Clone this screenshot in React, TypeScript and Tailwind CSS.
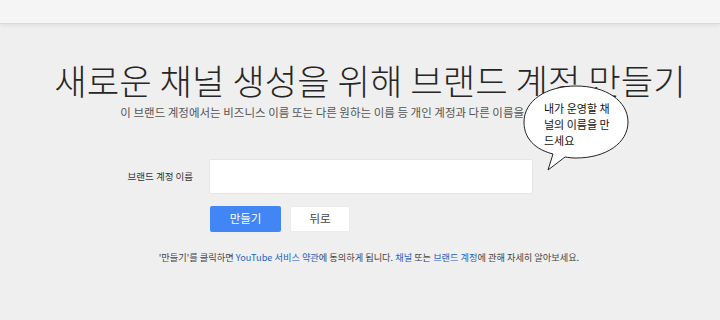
const font = '[font-family:"Noto_Sans_CJK_KR","Noto_Sans",sans-serif]'

function SpeechBubble() {
  return (
    <div className="absolute left-[520px] top-[82px] w-[114px] h-[92px]">
      <svg width="114" height="92" viewBox="0 0 114 92" className="absolute inset-0">
        <path
          d="M33 72 C 10 66, 4 52, 4 40 C 4 19, 26 4, 56 4 C 86 4, 108 19, 108 40 C 108 61, 86 76, 56 76 C 52 76, 48 75.5, 45 75 L 28 88 Z"
          fill="#ffffff"
          stroke="#222222"
          strokeWidth="1"
        />
      </svg>
      <div className="absolute left-[24px] top-[18px] flex flex-col text-[11px] leading-[16px] text-[#111] whitespace-nowrap">
        <span>내가 운영할 채</span>
        <span>널의 이름을 만</span>
        <span>드세요</span>
      </div>
    </div>
  )
}

export default function App() {
  return (
    <div className={`relative w-[720px] h-[320px] overflow-hidden bg-[#efefef] ${font}`}>
      <header className="h-[24px] bg-[#f5f5f5] border-b border-[#dadada] shadow-[0_2px_4px_rgba(0,0,0,0.06)]" />

      <main className="flex flex-col">
        <h1 className="mt-[35px] pl-[20px] text-center text-[35.3px] leading-[42px] font-light text-[#262626]">
          새로운 채널 생성을 위해 브랜드 계정 만들기
        </h1>
        <p className="mt-[3px] pl-[20px] text-center text-[11.5px] leading-[16px] text-[#555]">
          이 브랜드 계정에서는 비즈니스 이름 또는 다른 원하는 이름 등 개인 계정과 다른 이름을 사용할 수 있습니다.
        </p>

        <div className="mt-[39px] flex items-center gap-[16px]">
          <label className="w-[193px] text-right text-[9.5px] text-[#333]">브랜드 계정 이름</label>
          <input
            className="w-[324px] h-[35px] bg-white border border-[#e6e6e6] rounded-[2px] px-2 text-[12px] outline-none"
            aria-label="브랜드 계정 이름"
          />
        </div>

        <div className="mt-[12px] ml-[210px] flex gap-[9px]">
          <button className="w-[71px] h-[26px] rounded-[2px] bg-[#4285f4] text-white text-[11.5px]">
            만들기
          </button>
          <button className="w-[60px] h-[26px] rounded-[2px] bg-white border border-[#ececec] text-[#444] text-[11.5px]">
            뒤로
          </button>
        </div>

        <p className="mt-[18px] pl-[18px] text-center text-[9.2px] leading-[14px] text-[#444]">
          '만들기'를 클릭하면 <a className="text-[#2462c5]">YouTube 서비스 약관</a>에 동의하게 됩니다.{' '}
          <a className="text-[#2462c5]">채널</a> 또는 <a className="text-[#2462c5]">브랜드 계정</a>에 관해 자세히 알아보세요.
        </p>
      </main>

      <SpeechBubble />
    </div>
  )
}
